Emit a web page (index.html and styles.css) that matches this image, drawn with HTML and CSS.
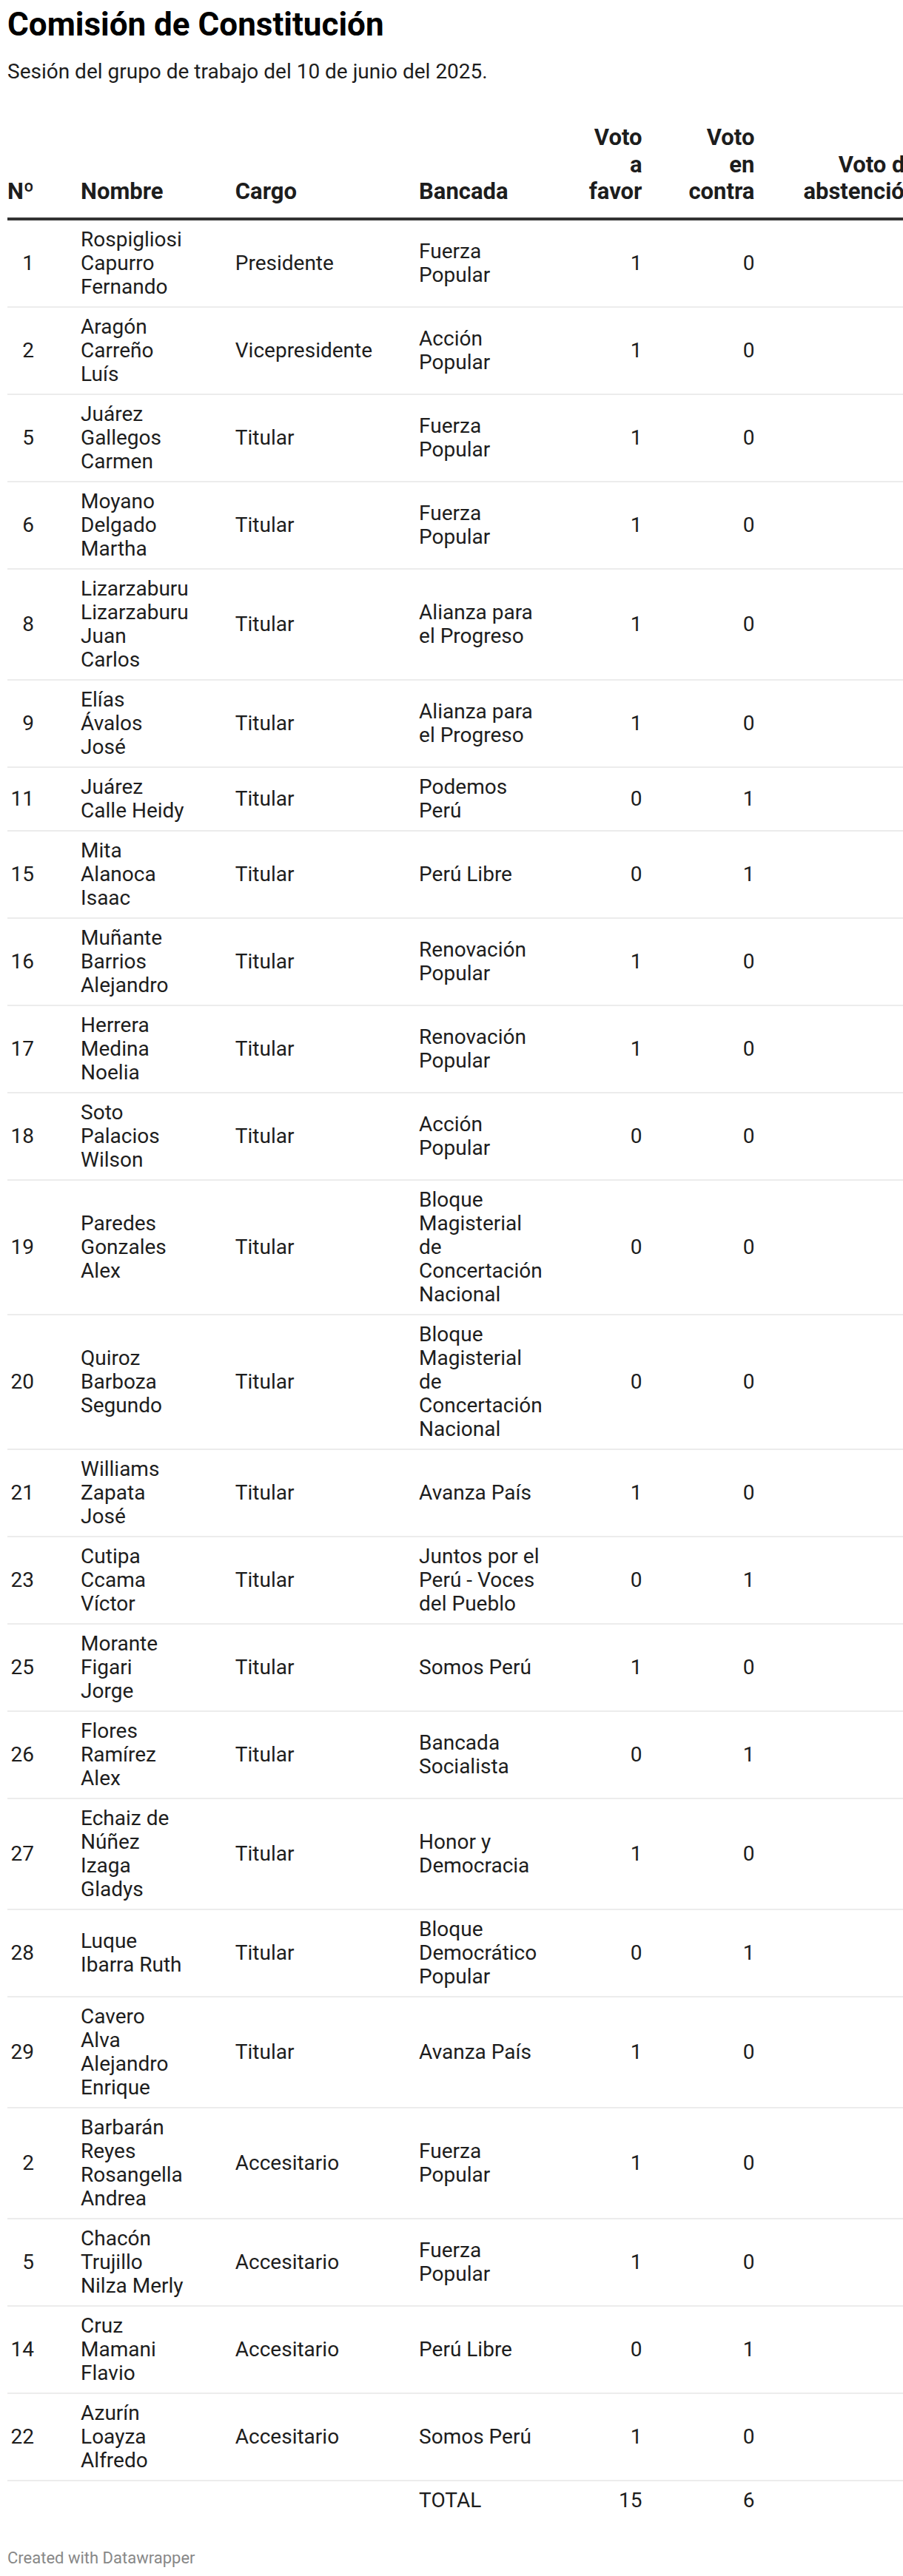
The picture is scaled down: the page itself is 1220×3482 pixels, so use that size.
FILE: index.html
```html
<!DOCTYPE html>
<html lang="es">
<head>
<meta charset="utf-8">
<title>Comisión de Constitución</title>
<link rel="stylesheet" href="styles.css">
</head>
<body>
<div class="chart">
  <h1 class="title">Comisión de Constitución</h1>
  <p class="subtitle">Sesión del grupo de trabajo del 10 de junio del 2025.</p>
  <table class="votes">
    <thead>
      <tr>
        <th class="num">Nº</th>
        <th>Nombre</th>
        <th>Cargo</th>
        <th>Bancada</th>
        <th class="num">Voto a favor</th>
        <th class="num">Voto en contra</th>
        <th class="num last">Voto de abstención</th>
      </tr>
    </thead>
    <tbody>
      <tr><td class="num">1</td><td>Rospigliosi Capurro Fernando</td><td>Presidente</td><td>Fuerza Popular</td><td class="num">1</td><td class="num">0</td><td class="num last">0</td></tr>
      <tr><td class="num">2</td><td>Aragón Carreño Luís</td><td>Vicepresidente</td><td>Acción Popular</td><td class="num">1</td><td class="num">0</td><td class="num last">0</td></tr>
      <tr><td class="num">5</td><td>Juárez Gallegos Carmen</td><td>Titular</td><td>Fuerza Popular</td><td class="num">1</td><td class="num">0</td><td class="num last">0</td></tr>
      <tr><td class="num">6</td><td>Moyano Delgado Martha</td><td>Titular</td><td>Fuerza Popular</td><td class="num">1</td><td class="num">0</td><td class="num last">0</td></tr>
      <tr><td class="num">8</td><td>Lizarzaburu Lizarzaburu Juan Carlos</td><td>Titular</td><td>Alianza para el Progreso</td><td class="num">1</td><td class="num">0</td><td class="num last">0</td></tr>
      <tr><td class="num">9</td><td>Elías Ávalos José</td><td>Titular</td><td>Alianza para el Progreso</td><td class="num">1</td><td class="num">0</td><td class="num last">0</td></tr>
      <tr><td class="num">11</td><td>Juárez Calle Heidy</td><td>Titular</td><td>Podemos Perú</td><td class="num">0</td><td class="num">1</td><td class="num last">0</td></tr>
      <tr><td class="num">15</td><td>Mita Alanoca Isaac</td><td>Titular</td><td>Perú Libre</td><td class="num">0</td><td class="num">1</td><td class="num last">0</td></tr>
      <tr><td class="num">16</td><td>Muñante Barrios Alejandro</td><td>Titular</td><td>Renovación Popular</td><td class="num">1</td><td class="num">0</td><td class="num last">0</td></tr>
      <tr><td class="num">17</td><td>Herrera Medina Noelia</td><td>Titular</td><td>Renovación Popular</td><td class="num">1</td><td class="num">0</td><td class="num last">0</td></tr>
      <tr><td class="num">18</td><td>Soto Palacios Wilson</td><td>Titular</td><td>Acción Popular</td><td class="num">0</td><td class="num">0</td><td class="num last">1</td></tr>
      <tr><td class="num">19</td><td>Paredes Gonzales Alex</td><td>Titular</td><td>Bloque Magisterial de Concertación Nacional</td><td class="num">0</td><td class="num">0</td><td class="num last">1</td></tr>
      <tr><td class="num">20</td><td>Quiroz Barboza Segundo</td><td>Titular</td><td>Bloque Magisterial de Concertación Nacional</td><td class="num">0</td><td class="num">0</td><td class="num last">1</td></tr>
      <tr><td class="num">21</td><td>Williams Zapata José</td><td>Titular</td><td>Avanza País</td><td class="num">1</td><td class="num">0</td><td class="num last">0</td></tr>
      <tr><td class="num">23</td><td>Cutipa Ccama Víctor</td><td>Titular</td><td>Juntos por el Perú - Voces del Pueblo</td><td class="num">0</td><td class="num">1</td><td class="num last">0</td></tr>
      <tr><td class="num">25</td><td>Morante Figari Jorge</td><td>Titular</td><td>Somos Perú</td><td class="num">1</td><td class="num">0</td><td class="num last">0</td></tr>
      <tr><td class="num">26</td><td>Flores Ramírez Alex</td><td>Titular</td><td>Bancada Socialista</td><td class="num">0</td><td class="num">1</td><td class="num last">0</td></tr>
      <tr><td class="num">27</td><td>Echaiz de Núñez Izaga Gladys</td><td>Titular</td><td>Honor y Democracia</td><td class="num">1</td><td class="num">0</td><td class="num last">0</td></tr>
      <tr><td class="num">28</td><td>Luque Ibarra Ruth</td><td>Titular</td><td>Bloque Democrático Popular</td><td class="num">0</td><td class="num">1</td><td class="num last">0</td></tr>
      <tr><td class="num">29</td><td>Cavero Alva Alejandro Enrique</td><td>Titular</td><td>Avanza País</td><td class="num">1</td><td class="num">0</td><td class="num last">0</td></tr>
      <tr><td class="num">2</td><td>Barbarán Reyes Rosangella Andrea</td><td>Accesitario</td><td>Fuerza Popular</td><td class="num">1</td><td class="num">0</td><td class="num last">0</td></tr>
      <tr><td class="num">5</td><td>Chacón Trujillo Nilza Merly</td><td>Accesitario</td><td>Fuerza Popular</td><td class="num">1</td><td class="num">0</td><td class="num last">0</td></tr>
      <tr><td class="num">14</td><td>Cruz Mamani Flavio</td><td>Accesitario</td><td>Perú Libre</td><td class="num">0</td><td class="num">1</td><td class="num last">0</td></tr>
      <tr><td class="num">22</td><td>Azurín Loayza Alfredo</td><td>Accesitario</td><td>Somos Perú</td><td class="num">1</td><td class="num">0</td><td class="num last">0</td></tr>
      <tr class="total"><td class="num"></td><td></td><td></td><td>TOTAL</td><td class="num">15</td><td class="num">6</td><td class="num last">3</td></tr>
    </tbody>
  </table>
  <p class="footer">Created with Datawrapper</p>
</div>
</body>
</html>
```
FILE: styles.css
```css
html, body {
  margin: 0;
  padding: 0;
  background: #ffffff;
}

body {
  font-family: Roboto, "Liberation Sans", Arial, sans-serif;
  color: #1d1d1d;
}

.chart {
  padding: 7px 10px 0 10px;
  overflow: hidden;
}

.title {
  margin: 0;
  font-size: 44px;
  line-height: 52px;
  font-weight: 700;
  color: #000000;
}

.subtitle {
  margin: 20px 0 0 0;
  font-size: 28px;
  line-height: 36px;
  color: #1d1d1d;
}

.votes {
  margin-top: 43px;
  width: 1px;
  border-collapse: collapse;
  border-spacing: 0;
}

.votes th {
  font-size: 31px;
  line-height: 36.6px;
  font-weight: 700;
  text-align: left;
  vertical-align: bottom;
  padding: 10px 63px 16px 0;
  border-bottom: 4px solid #333333;
}

.votes td {
  font-size: 28px;
  line-height: 32px;
  text-align: left;
  vertical-align: middle;
  padding: 10px 63px 10px 0;
  border-bottom: 2px solid #ececec;
}

.votes th.num,
.votes td.num {
  text-align: right;
}

.votes th.last,
.votes td.last {
  padding-left: 3px;
}

.votes tr.total td {
  border-bottom: none;
}

.footer {
  margin: 39px 0 0 0;
  font-size: 22px;
  line-height: 26px;
  color: #888888;
}
```
